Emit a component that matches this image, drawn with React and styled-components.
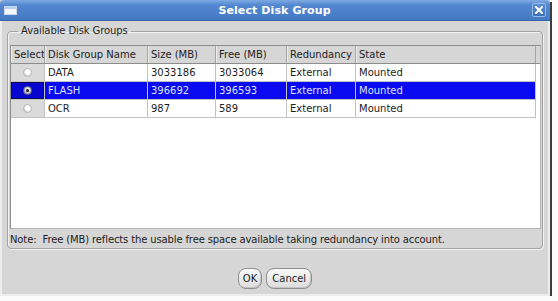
import React from "react";
import styled, { createGlobalStyle } from "styled-components";

const GlobalStyle = createGlobalStyle`
  html, body {
    margin: 0;
    padding: 0;
    background: #fbfbfb;
  }
  body {
    font-family: "DejaVu Sans", "Bitstream Vera Sans", sans-serif;
    font-size: 10px;
    color: #1c1c1c;
  }
`;

const columns = [
  { key: "select", title: "Select", width: 34 },
  { key: "name", title: "Disk Group Name", width: 103 },
  { key: "size", title: "Size (MB)", width: 68 },
  { key: "free", title: "Free (MB)", width: 71 },
  { key: "redundancy", title: "Redundancy", width: 69 },
  { key: "state", title: "State", width: 180 },
];

const gridColumns = columns.map((c) => `${c.width}px`).join(" ");

const rows = [
  { name: "DATA", size: "3033186", free: "3033064", redundancy: "External", state: "Mounted" },
  { name: "FLASH", size: "396692", free: "396593", redundancy: "External", state: "Mounted", selected: true },
  { name: "OCR", size: "987", free: "589", redundancy: "External", state: "Mounted" },
];

const Frame = styled.div`
  width: 550px;
  box-shadow: 2px 2px 0 #3c3c3c;
  background: #d6d6d6;
`;

const TitleBar = styled.div`
  height: 21px;
  display: flex;
  align-items: center;
  justify-content: space-between;
  padding: 0 4px 0 3px;
  box-sizing: border-box;
  border-radius: 4px 4px 0 0;
  background: linear-gradient(#7eaae2 0%, #5388d0 25%, #4479c4 100%);
  border-bottom: 1px solid #3465aa;
`;

const Title = styled.div`
  flex: 1;
  text-align: center;
  color: #ffffff;
  font-weight: bold;
  font-size: 11px;
  letter-spacing: 0.1px;
`;

const IconSlot = styled.div`
  width: 14px;
  height: 15px;
  display: flex;
  align-items: center;
  justify-content: center;
`;

const CloseButton = styled.div`
  width: 14px;
  height: 14px;
  box-sizing: border-box;
  border: 1px solid #95b8e6;
  border-radius: 2px;
  background: linear-gradient(#5a8dd2, #3e70b8);
  display: flex;
  align-items: center;
  justify-content: center;
`;

const Body = styled.div`
  height: 275px;
  box-sizing: border-box;
  border: 2px solid #ededed;
  border-top: none;
  padding: 4px 5px 0 5px;
  display: flex;
  flex-direction: column;
`;

const GroupBox = styled.fieldset`
  margin: 0;
  padding: 0 1px 1px 2px;
  border: 1px solid #a2a2a2;
  border-radius: 4px;
  box-shadow: inset 1px 1px 0 #f2f2f2, 1px 1px 0 #f2f2f2;
  height: 224px;
  box-sizing: border-box;
`;

const Legend = styled.legend`
  margin-left: 8px;
  padding: 0 3px;
  line-height: 12px;
  letter-spacing: -0.1px;
  color: #1e1e1e;
`;

const ScrollPane = styled.div`
  margin-top: 8px;
  height: 184px;
  box-sizing: border-box;
  border: 1px solid #8e8e8e;
  border-right-color: #b4b4b4;
  border-bottom-color: #b4b4b4;
  background: #ffffff;
`;

const HeaderBar = styled.div`
  background: #d6d6d6;
  border-bottom: 1px solid #8c8c8c;
`;

const RowGrid = styled.div`
  display: grid;
  grid-template-columns: ${gridColumns};
  width: 525px;
  background: ${(p) => (p.$selected ? "#0a0af0" : "transparent")};
  color: ${(p) => (p.$selected ? "#dce2ff" : "#1c1c1c")};
`;

const HeaderCell = styled.div`
  height: 17px;
  line-height: 17px;
  padding-left: 3px;
  box-sizing: border-box;
  border-right: 1px solid #a4a4a4;
  box-shadow: inset 1px 0 0 #ececec;
  white-space: nowrap;
  overflow: hidden;
`;

const Cell = styled.div`
  height: 18px;
  line-height: 17px;
  padding-left: 3px;
  box-sizing: border-box;
  border-right: 1px solid #c2c2c2;
  border-bottom: 1px solid #c2c2c2;
  white-space: nowrap;
  overflow: hidden;
`;

const SelectCell = styled(Cell)`
  padding-left: 0;
  display: flex;
  align-items: center;
  justify-content: center;
  background: ${(p) => (p.$focused ? "#0606d0" : "#dadada")};
  box-shadow: ${(p) => (p.$focused ? "inset 0 0 0 1px #0c0c50" : "none")};
`;

const Radio = styled.span`
  width: 9px;
  height: 9px;
  border-radius: 50%;
  box-sizing: border-box;
  display: flex;
  align-items: center;
  justify-content: center;
  border: 1px solid ${(p) => (p.$checked ? "#6c6c88" : "#b4b4b4")};
  background: ${(p) =>
    p.$checked
      ? "radial-gradient(circle at 60% 35%, #e6e6f0 0 25%, #9a9ab0 80%)"
      : "radial-gradient(circle at 65% 35%, #ffffff 0 40%, #c6c6c6 95%)"};
`;

const Dot = styled.span`
  width: 3px;
  height: 3px;
  border-radius: 50%;
  background: #202030;
`;

const Note = styled.div`
  margin-top: 5px;
  line-height: 12px;
  white-space: pre;
  letter-spacing: -0.13px;
  color: #1c1c1c;
`;

const ButtonRow = styled.div`
  display: flex;
  justify-content: center;
  gap: 4px;
  margin-top: 19px;
`;

const Button = styled.button`
  height: 21px;
  padding: 0 ${(p) => p.$pad}px;
  font-family: "DejaVu Sans", sans-serif;
  font-size: 10px;
  color: #1e1e1e;
  border: 1px solid #8f8f8f;
  border-radius: 8px;
  background: linear-gradient(#fafafa, #dcdcdc);
  box-shadow: inset -1px -1px 0 #c4c4c4;
`;

const WindowIcon = () => (
  <svg width="13" height="9" viewBox="0 0 13 9">
    <rect x="0.5" y="0.5" width="12" height="8" fill="#f4f6fb" stroke="#c9d8ee" />
    <rect x="1" y="1" width="11" height="2" fill="#b9cdea" />
  </svg>
);

const CloseIcon = () => (
  <svg width="8" height="8" viewBox="0 0 8 8">
    <path d="M1 1 L7 7 M7 1 L1 7" stroke="#ffffff" strokeWidth="2" strokeLinecap="square" />
  </svg>
);

export default function App() {
  return (
    <>
      <GlobalStyle />
      <Frame>
        <TitleBar>
          <IconSlot>
            <WindowIcon />
          </IconSlot>
          <Title>Select Disk Group</Title>
          <CloseButton>
            <CloseIcon />
          </CloseButton>
        </TitleBar>
        <Body>
          <GroupBox>
            <Legend>Available Disk Groups</Legend>
            <ScrollPane>
              <HeaderBar>
                <RowGrid>
                  {columns.map((c) => (
                    <HeaderCell key={c.key}>{c.title}</HeaderCell>
                  ))}
                </RowGrid>
              </HeaderBar>
              {rows.map((r) => (
                <RowGrid key={r.name} $selected={r.selected}>
                  <SelectCell $focused={r.selected}>
                    <Radio $checked={r.selected}>{r.selected && <Dot />}</Radio>
                  </SelectCell>
                  <Cell>{r.name}</Cell>
                  <Cell>{r.size}</Cell>
                  <Cell>{r.free}</Cell>
                  <Cell>{r.redundancy}</Cell>
                  <Cell>{r.state}</Cell>
                </RowGrid>
              ))}
            </ScrollPane>
            <Note>Note:  Free (MB) reflects the usable free space available taking redundancy into account.</Note>
          </GroupBox>
          <ButtonRow>
            <Button $pad={4}>OK</Button>
            <Button $pad={5}>Cancel</Button>
          </ButtonRow>
        </Body>
      </Frame>
    </>
  );
}
